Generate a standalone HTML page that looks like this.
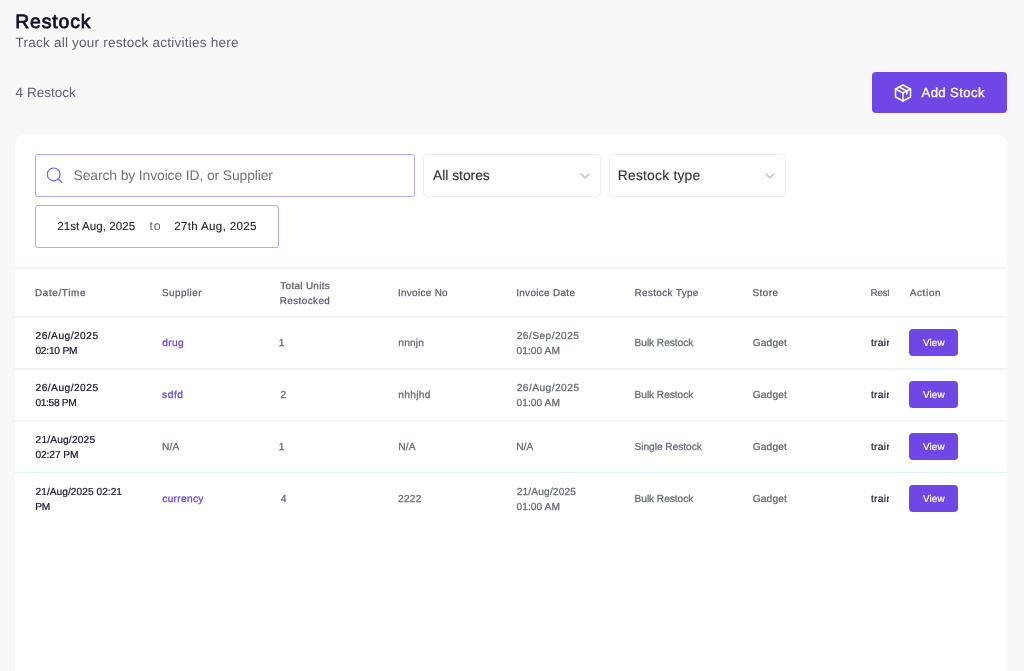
<!DOCTYPE html>
<html lang="en">
<head>
<meta charset="utf-8">
<title>Restock</title>
<style>
*{box-sizing:border-box;margin:0;padding:0}
html,body{width:1024px;height:671px;overflow:hidden;background:#f8f8f8;font-family:"Liberation Sans",sans-serif;color:#15112d}
/*TS*/
.t{position:absolute;white-space:nowrap;line-height:16px;height:16px;font-family:"Liberation Sans",sans-serif;text-rendering:geometricPrecision}
.h1{font-size:19.4px;font-weight:400;-webkit-text-stroke:0.75px #130f2d;color:#130f2d;line-height:24px;height:24px}
.sub{font-size:13.5px;color:#5f5d74}
.btn{font-size:13.2px;color:#fff;-webkit-text-stroke:0.3px #fff}
.ph{font-size:13.9px;color:#747474}
.sel{font-size:13.9px;color:#34333d;-webkit-text-stroke:0.15px #34333d}
.date{font-size:11.6px;color:#1f1d2b;-webkit-text-stroke:0.1px #1f1d2b}
.to{font-size:12.4px;color:#5f5d74}
.th{font-size:9.9px;color:#5d5b72;-webkit-text-stroke:0.25px #5d5b72}
.dk{font-size:10.2px;color:#17132f;-webkit-text-stroke:0.2px #17132f}
.gr{font-size:10.2px;color:#636a77;-webkit-text-stroke:0.25px #636a77}
.pu{font-size:10.2px;color:#6f47e4;-webkit-text-stroke:0.3px #6f47e4}
.vw{font-size:9.9px;color:#fff;-webkit-text-stroke:0.2px #fff}
/*TE*/
.layer{position:absolute;left:0;top:0;width:1024px;height:671px;will-change:transform}
.addbtn{position:absolute;left:872px;top:72px;width:135px;height:41px;background:#6f47e4;border-radius:4px}
.addbtn svg{position:absolute;left:21px;top:11px}
.card{position:absolute;left:15px;top:134px;width:992px;height:560px;background:#fff;border-radius:12px}
.search{position:absolute;left:35px;top:154px;width:380px;height:43px;border:1px solid #b4a7f6;border-radius:3px}
.search svg{position:absolute;left:9.3px;top:10.1px}
.selbox{position:absolute;top:154px;height:43px;border:1px solid #efefef;border-radius:4px}
.selbox svg{position:absolute;right:9.5px;top:17px}
.datebox{position:absolute;left:35px;top:205px;width:244px;height:43px;border:1px solid #b4a7f6;border-radius:3px}
.hl{position:absolute;left:15px;width:992px;height:2px;background:#eef3fb}
.vbtn{position:absolute;left:909px;width:49px;height:27px;background:#6f47e4;border-radius:4px}
.clip{position:absolute;left:868px;width:21px;overflow:hidden;height:18px}
.clip span{position:absolute;left:2.3px;top:0;white-space:nowrap;font-size:10.2px;line-height:16px;text-rendering:geometricPrecision}
</style>
</head>
<body>
<div class="layer">
<div class="addbtn">
<svg width="20" height="20" viewBox="0 0 20 20" fill="none" stroke="#fff" stroke-width="1.5" stroke-linejoin="round" stroke-linecap="round"><path d="M10 2 L17.5 6 V14 L10 18 L2.5 14 V6 Z"/><path d="M2.5 6 L10 10 L17.5 6"/><path d="M10 10 V18"/><path d="M6.2 4 L13.8 8 V11"/></svg>
</div>
<div class="card"></div>
<div class="search">
<svg width="20" height="20" viewBox="0 0 20 20" fill="none" stroke="#7a5af0" stroke-width="1.15" stroke-linecap="round"><circle cx="8.7" cy="9.4" r="6.4"/><path d="M13.4 14.0 L16.8 17.4"/></svg>
</div>
<div class="selbox" style="left:423px;width:178px"><svg width="12" height="8" viewBox="0 0 12 8" fill="none" stroke="#c8c8c8" stroke-width="1.6" stroke-linecap="round" stroke-linejoin="round"><path d="M2.2 2.1 L6 5.9 L9.8 2.1"/></svg></div>
<div class="selbox" style="left:609px;width:177px"><svg width="12" height="8" viewBox="0 0 12 8" fill="none" stroke="#c8c8c8" stroke-width="1.6" stroke-linecap="round" stroke-linejoin="round"><path d="M2.2 2.1 L6 5.9 L9.8 2.1"/></svg></div>
<div class="datebox"></div>
<div class="hl" style="top:267px;height:1px;background:#f4f8fd"></div>
<div class="hl" style="top:268px;height:1px;background:#e9f0fb"></div>
<div class="hl" style="top:316px"></div>
<div class="hl" style="top:368px"></div>
<div class="hl" style="top:420px"></div>
<div class="hl" style="top:472px;height:1px;background:#e8f0fa"></div>
<div class="hl" style="top:473px;height:1px;background:#f9fbfe"></div>
<div class="vbtn" style="top:329px"></div>
<div class="vbtn" style="top:381px"></div>
<div class="vbtn" style="top:433px"></div>
<div class="vbtn" style="top:485px"></div>
<div class="clip" style="top:286px"><span style="color:#5f5d74;-webkit-text-stroke:0.2px #5f5d74;font-size:9.9px;letter-spacing:-0.25px;left:2.6px">Restocked By</span></div>
<div class="clip" style="top:336px"><span style="color:#17132f;-webkit-text-stroke:0.2px #17132f;letter-spacing:0.35px;left:2.9px">training</span></div>
<div class="clip" style="top:388px"><span style="color:#17132f;-webkit-text-stroke:0.2px #17132f;letter-spacing:0.35px;left:2.9px">training</span></div>
<div class="clip" style="top:440px"><span style="color:#17132f;-webkit-text-stroke:0.2px #17132f;letter-spacing:0.35px;left:2.9px">training</span></div>
<div class="clip" style="top:492px"><span style="color:#17132f;-webkit-text-stroke:0.2px #17132f;letter-spacing:0.35px;left:2.9px">training</span></div>

<h1 class="t h1" id="i0" style="left:15.24px;top:10px;letter-spacing:0.850px">Restock</h1>
<p class="t sub" id="i1" style="left:15.44px;top:35px;letter-spacing:0.243px">Track all your restock activities here</p>
<p class="t sub" id="i2" style="left:15.60px;top:85px;letter-spacing:0.025px">4 Restock</p>
<span class="t btn" id="i3" style="left:921.46px;top:85px;letter-spacing:0.384px">Add Stock</span>
<span class="t ph" id="i4" style="left:73.62px;top:167px;letter-spacing:-0.117px">Search by Invoice ID, or Supplier</span>
<span class="t sel" id="i5" style="left:433.03px;top:167px;letter-spacing:-0.038px">All stores</span>
<span class="t sel" id="i6" style="left:617.78px;top:167px;letter-spacing:0.198px">Restock type</span>
<span class="t date" id="i7" style="left:57.18px;top:219px;letter-spacing:0.056px">21st Aug, 2025</span>
<span class="t to" id="i8" style="left:149.48px;top:218px;letter-spacing:0.894px">to</span>
<span class="t date" id="i9" style="left:174.20px;top:219px;letter-spacing:0.336px">27th Aug, 2025</span>
<span class="t th" id="i10" style="left:35.03px;top:286px;letter-spacing:0.647px">Date/Time</span>
<span class="t th" id="i11" style="left:161.96px;top:286px;letter-spacing:0.466px">Supplier</span>
<span class="t th" id="i12" style="left:280.36px;top:279px;letter-spacing:0.326px">Total Units</span>
<span class="t th" id="i13" style="left:279.80px;top:294px;letter-spacing:0.418px">Restocked</span>
<span class="t th" id="i14" style="left:397.94px;top:286px;letter-spacing:0.335px">Invoice No</span>
<span class="t th" id="i15" style="left:516.15px;top:286px;letter-spacing:0.355px">Invoice Date</span>
<span class="t th" id="i16" style="left:634.57px;top:286px;letter-spacing:0.374px">Restock Type</span>
<span class="t th" id="i17" style="left:752.39px;top:286px;letter-spacing:0.532px">Store</span>
<span class="t th" id="i18" style="left:909.73px;top:286px;letter-spacing:0.677px">Action</span>
<span class="t dk" id="i19" style="left:35.54px;top:329px;letter-spacing:0.475px">26/Aug/2025</span>
<span class="t dk" id="i20" style="left:35.43px;top:344px;letter-spacing:-0.226px">02:10 PM</span>
<span class="t dk" id="i21" style="left:35.54px;top:381px;letter-spacing:0.475px">26/Aug/2025</span>
<span class="t dk" id="i22" style="left:35.41px;top:396px;letter-spacing:-0.315px">01:58 PM</span>
<span class="t dk" id="i23" style="left:35.55px;top:433px;letter-spacing:0.173px">21/Aug/2025</span>
<span class="t dk" id="i24" style="left:35.44px;top:448px;letter-spacing:-0.086px">02:27 PM</span>
<span class="t dk" id="i25" style="left:35.52px;top:485px;letter-spacing:0.026px">21/Aug/2025 02:21</span>
<span class="t dk" id="i26" style="left:35.23px;top:500px;letter-spacing:-0.375px">PM</span>
<span class="t pu" id="i27" style="left:162.14px;top:336px;letter-spacing:0.401px">drug</span>
<span class="t pu" id="i28" style="left:162.02px;top:388px;letter-spacing:0.578px">sdfd</span>
<span class="t gr" id="i29" style="left:161.96px;top:440px;letter-spacing:0.129px">N/A</span>
<span class="t pu" id="i30" style="left:162.26px;top:492px;letter-spacing:0.306px">currency</span>
<span class="t gr" id="i31" style="left:278.79px;top:336px">1</span>
<span class="t gr" id="i32" style="left:280.51px;top:388px">2</span>
<span class="t gr" id="i33" style="left:278.79px;top:440px">1</span>
<span class="t gr" id="i34" style="left:280.78px;top:492px">4</span>
<span class="t gr" id="i35" style="left:398.31px;top:336px;letter-spacing:0.180px">nnnjn</span>
<span class="t gr" id="i36" style="left:398.27px;top:388px;letter-spacing:0.333px">nhhjhd</span>
<span class="t gr" id="i37" style="left:398.17px;top:440px;letter-spacing:0.171px">N/A</span>
<span class="t gr" id="i38" style="left:398.07px;top:492px;letter-spacing:0.202px">2222</span>
<span class="t gr" id="i39" style="left:516.70px;top:329px;letter-spacing:0.455px">26/Sep/2025</span>
<span class="t gr" id="i40" style="left:516.53px;top:344px;letter-spacing:0.057px">01:00 AM</span>
<span class="t gr" id="i41" style="left:516.65px;top:381px;letter-spacing:0.462px">26/Aug/2025</span>
<span class="t gr" id="i42" style="left:516.53px;top:396px;letter-spacing:0.057px">01:00 AM</span>
<span class="t gr" id="i43" style="left:516.15px;top:440px;letter-spacing:0.117px">N/A</span>
<span class="t gr" id="i44" style="left:516.66px;top:485px;letter-spacing:0.157px">21/Aug/2025</span>
<span class="t gr" id="i45" style="left:516.53px;top:500px;letter-spacing:0.057px">01:00 AM</span>
<span class="t gr" id="i46" style="left:634.55px;top:336px;letter-spacing:-0.066px">Bulk Restock</span>
<span class="t gr" id="i47" style="left:634.55px;top:388px;letter-spacing:-0.066px">Bulk Restock</span>
<span class="t gr" id="i48" style="left:634.56px;top:440px;letter-spacing:-0.054px">Single Restock</span>
<span class="t gr" id="i49" style="left:634.55px;top:492px;letter-spacing:-0.066px">Bulk Restock</span>
<span class="t gr" id="i50" style="left:752.65px;top:336px;letter-spacing:0.171px">Gadget</span>
<span class="t gr" id="i51" style="left:752.65px;top:388px;letter-spacing:0.171px">Gadget</span>
<span class="t gr" id="i52" style="left:752.65px;top:440px;letter-spacing:0.171px">Gadget</span>
<span class="t gr" id="i53" style="left:752.65px;top:492px;letter-spacing:0.171px">Gadget</span>
<span class="t vw" id="i54" style="left:922.89px;top:336px;letter-spacing:0.187px">View</span>
<span class="t vw" id="i55" style="left:922.89px;top:388px;letter-spacing:0.187px">View</span>
<span class="t vw" id="i56" style="left:922.89px;top:440px;letter-spacing:0.187px">View</span>
<span class="t vw" id="i57" style="left:922.89px;top:492px;letter-spacing:0.187px">View</span>

</div></body></html>
